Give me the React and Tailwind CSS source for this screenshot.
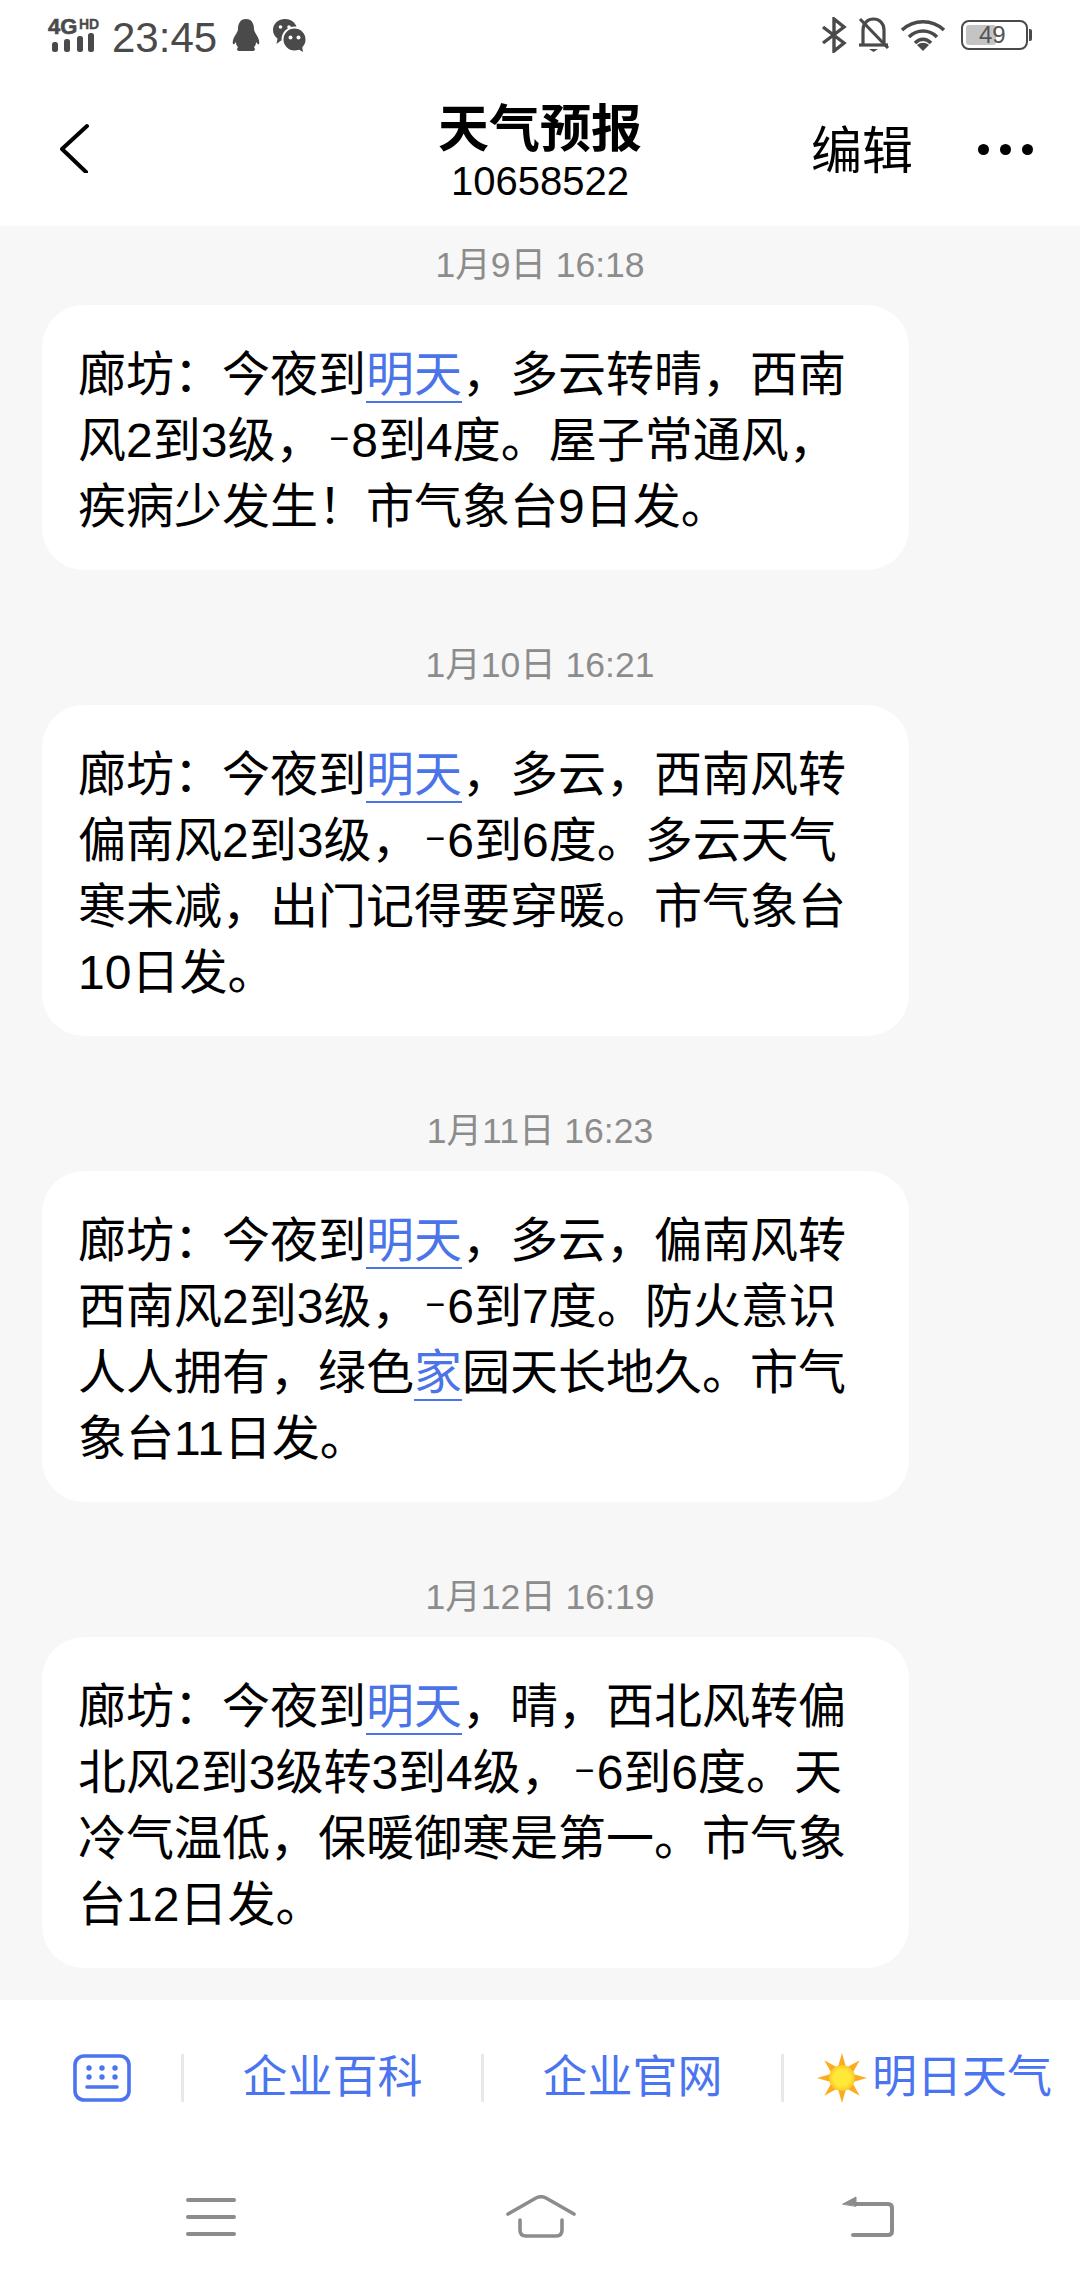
import { useMemo } from "react";

function Msg({ time, children }) {
  return (
    <div className="mb-[71px]">
      <div className="mb-[20px] h-[44px] text-center text-[35.5px] leading-[48px] text-[#8c8c8c]">{time}</div>
      <div className="ml-[42px] w-[867px] rounded-[42px] bg-white px-[36px] pb-[30px] pt-[37px] text-[48px] leading-[66px] text-black whitespace-nowrap">
        {children}
      </div>
    </div>
  );
}

function Link({ children }) {
  return (
    <span className="text-[#4a74e8] underline decoration-[2px] underline-offset-[10px]">{children}</span>
  );
}

// the reference's minus is shorter and sits higher than the font's
function Minus() {
  return <span className="relative -top-[7px] ml-[6px] mr-[2px] text-[34px] leading-none">−</span>;
}

function Sun() {
  // 8 rays, tips at r=25 and valleys at r=11
  const points = useMemo(() => {
    const out = [];
    for (let i = 0; i < 16; i++) {
      const r = i % 2 === 0 ? 25 : 11;
      const a = (i * Math.PI) / 8 - Math.PI / 2;
      out.push(`${25 + r * Math.cos(a)},${25 + r * Math.sin(a)}`);
    }
    return out.join(" ");
  }, []);
  return (
    <svg width="50" height="50" viewBox="0 0 50 50">
      <defs>
        <radialGradient id="sunCore">
          <stop offset="0.65" stopColor="#ffe838" />
          <stop offset="1" stopColor="#ffc428" />
        </radialGradient>
      </defs>
      <polygon points={points} fill="#fbab1e" />
      <circle cx="25" cy="25" r="13" fill="url(#sunCore)" />
    </svg>
  );
}

export default function App() {
  return (
    <div className="flex h-[2280px] w-[1080px] flex-col overflow-hidden bg-white font-['Liberation_Sans','Noto_Sans_CJK_SC',sans-serif]">
      {/* status bar */}
      <div className="flex h-[70px] shrink-0 items-center pl-[48px] pr-[48px] text-[#4a4a4a]">
        <div className="relative h-[36px] w-[52px]">
          <span className="absolute left-0 top-[-3px] text-[22px] font-bold leading-[26px] [-webkit-text-stroke:0.6px_#4a4a4a]">4G</span>
          <span className="absolute left-[31px] top-[0px] text-[14px] font-bold leading-[14px] [-webkit-text-stroke:0.3px_#4a4a4a]">HD</span>
          <svg className="absolute left-0 top-0" width="52" height="36" viewBox="0 0 52 36" fill="#4a4a4a">
            <rect x="4" y="25" width="6" height="10" rx="2.500" />
            <rect x="16" y="22" width="6" height="13" rx="2.500" />
            <rect x="29" y="19" width="6" height="16" rx="2.500" />
            <rect x="40" y="16" width="6" height="19" rx="2.500" />
          </svg>
        </div>
        <span className="ml-[12px] mt-[5px] text-[42px] leading-[48px]">23:45</span>
        <svg className="ml-[15px]" width="28" height="32" viewBox="0 0 28 32" fill="#4a4a4a">
          <path d="M14 0 C8 0 6 5 6 10 C6 12 5 13 4 15 C2 18 0 22 1 25 C2 26 3 24 4 23 C4 26 5 27 6 28 L5 30 Q5 32 8 32 L20 32 Q23 32 23 30 L22 28 C23 27 24 26 24 23 C25 24 26 26 27 25 C28 22 26 18 24 15 C23 13 22 12 22 10 C22 5 20 0 14 0 Z" />
        </svg>
        <svg className="ml-[13px]" width="33" height="33" viewBox="0 0 33 33">
          <path d="M12 0 C18.500 0 24 4.500 24 11 C24 17.500 18.500 22 12 22 C10.500 22 9 21.700 8 21.500 L3.500 25 L4.500 19.500 C1.500 17.500 0 14.500 0 11 C0 4.500 5.500 0 12 0 Z" fill="#4a4a4a" />
          <circle cx="7.500" cy="8" r="1.800" fill="#fff" />
          <circle cx="16" cy="8" r="1.800" fill="#fff" />
          <circle cx="21.500" cy="20.500" r="12" fill="#4a4a4a" stroke="#fff" strokeWidth="2" />
          <path d="M25 30 L30 33 L29 27 Z" fill="#4a4a4a" />
          <circle cx="17.500" cy="18.500" r="2" fill="#fff" />
          <circle cx="25.500" cy="18.500" r="2" fill="#fff" />
        </svg>
        <div className="ml-auto flex items-center">
          <svg width="26" height="36" viewBox="0 0 26 36" fill="none" stroke="#4a4a4a" strokeWidth="3.4">
            <path d="M2 10 L23 26 L13 34 V2 L23 10 L2 26" />
          </svg>
          <svg className="ml-[11px]" width="32" height="36" viewBox="0 0 32 36" fill="none" stroke="#4a4a4a" strokeWidth="3.2">
            <path d="M5 27 V13 C5 6 10 2 15.500 2 C21 2 26 6 26 13 V27" />
            <path d="M1 28 H30" />
            <path d="M2 2 L30 31" />
            <path d="M11 32 H20 L15.500 35 Z" fill="#4a4a4a" stroke="none" />
          </svg>
          <svg className="ml-[10px]" width="46" height="34" viewBox="0 0 46 34" fill="none" stroke="#4a4a4a" strokeWidth="3.6">
            <path d="M2 12 C14 1 32 1 44 12" />
            <path d="M9 19 C17 11 29 11 37 19" />
            <path d="M15 25 C20 20 26 20 31 25" />
            <path d="M17 27 L23 33 L29 27 C25 24 21 24 17 27 Z" fill="#4a4a4a" stroke="none" />
          </svg>
          <div className="ml-[15px] flex items-center">
            <div className="relative h-[30px] w-[67px] rounded-[8px] border-2 border-[#4a4a4a]">
              <div className="absolute left-[3px] top-[3px] h-[20px] w-[30px] rounded-[3px] bg-[#c4c4c4]" />
              <span className="absolute left-[16px] top-[-1px] text-[24px] leading-[28px] text-[#555]">49</span>
            </div>
            <div className="ml-[1px] h-[12px] w-[3px] rounded-r-[2px] bg-[#4a4a4a]" />
          </div>
        </div>
      </div>

      {/* title bar */}
      <div className="grid h-[156px] shrink-0 grid-cols-[1fr_auto_1fr] items-center">
        <div className="pl-[60px]">
          <svg width="30" height="50" viewBox="0 0 30 50" fill="none" stroke="#000" strokeWidth="4" strokeLinecap="round" strokeLinejoin="round">
            <path d="M27 3 L2 26 L26 49" />
          </svg>
        </div>
        <div className="pt-[7px] text-center text-black">
          <div className="text-[51px] font-bold leading-[58px]">天气预报</div>
          <div className="text-[40px] leading-[44px]">10658522</div>
        </div>
        <div className="flex items-center justify-end pr-[47px]">
          <span className="pt-[8px] text-[51px] leading-[60px] text-black">编辑</span>
          <div className="ml-[65px] mt-[3px] flex gap-[11px]">
            <div className="size-[11px] rounded-full bg-black" />
            <div className="size-[11px] rounded-full bg-black" />
            <div className="size-[11px] rounded-full bg-black" />
          </div>
        </div>
      </div>

      {/* messages */}
      <div className="h-[1774px] shrink-0 overflow-hidden bg-[#f7f7f7] pt-[15px]">
        <Msg time="1月9日 16:18">
          <div>廊坊：今夜到<Link>明天</Link>，多云转晴，西南</div>
          <div>风2到3级，<Minus />8到4度。屋子常通风，</div>
          <div>疾病少发生！市气象台9日发。</div>
        </Msg>
        <Msg time="1月10日 16:21">
          <div>廊坊：今夜到<Link>明天</Link>，多云，西南风转</div>
          <div>偏南风2到3级，<Minus />6到6度。多云天气</div>
          <div>寒未减，出门记得要穿暖。市气象台</div>
          <div>10日发。</div>
        </Msg>
        <Msg time="1月11日 16:23">
          <div>廊坊：今夜到<Link>明天</Link>，多云，偏南风转</div>
          <div>西南风2到3级，<Minus />6到7度。防火意识</div>
          <div>人人拥有，绿色<Link>家</Link>园天长地久。市气</div>
          <div>象台11日发。</div>
        </Msg>
        <Msg time="1月12日 16:19">
          <div>廊坊：今夜到<Link>明天</Link>，晴，西北风转偏</div>
          <div>北风2到3级转3到4级，<Minus />6到6度。天</div>
          <div>冷气温低，保暖御寒是第一。市气象</div>
          <div>台12日发。</div>
        </Msg>
      </div>

      {/* quick menu */}
      <div className="flex h-[156px] shrink-0 items-center text-[45px] leading-[50px] text-[#4a74f0]">
        <div className="box-content flex h-[48px] w-[158px] items-center justify-center border-r-[3px] border-[#e8e8e8] pl-[23px]">
          <svg width="58" height="48" viewBox="0 0 58 48" fill="none" stroke="#4a74f0" strokeWidth="3.6">
            <rect x="2" y="2" width="54" height="44" rx="9" />
            <path d="M14 33 H44" strokeLinecap="round" />
            <g fill="#4a74f0" stroke="none">
              <circle cx="16" cy="14" r="2.700" />
              <circle cx="29" cy="14" r="2.700" />
              <circle cx="42" cy="14" r="2.700" />
              <circle cx="16" cy="23" r="2.700" />
              <circle cx="29" cy="23" r="2.700" />
              <circle cx="42" cy="23" r="2.700" />
            </g>
          </svg>
        </div>
        <div className="box-content flex h-[48px] w-[297px] items-center justify-center border-r-[3px] border-[#e8e8e8]">企业百科</div>
        <div className="box-content flex h-[48px] w-[297px] items-center justify-center border-r-[3px] border-[#e8e8e8]">企业官网</div>
        <div className="flex h-[48px] items-center pl-[33px]">
          <Sun />
          <span className="ml-[5px]">明日天气</span>
        </div>
      </div>

      {/* system nav */}
      <div className="flex flex-1 items-center pb-[2px]">
        <div className="flex w-[422px] justify-center">
          <svg width="50" height="40" viewBox="0 0 50 40" fill="none" stroke="#8c8c8c" strokeWidth="4" strokeLinecap="round">
            <path d="M2 3 H48 M2 20 H48 M2 37 H48" />
          </svg>
        </div>
        <div className="flex w-[238px] justify-center">
          <svg width="72" height="44" viewBox="0 0 72 44" fill="none" stroke="#8c8c8c" strokeWidth="3.6" strokeLinecap="round" strokeLinejoin="round">
            <path d="M3 19 L31 3 Q36 0.500 41 3 L69 19" />
            <path d="M15 25 V35 Q15 41 21 41 H51 Q57 41 57 35 V25" />
          </svg>
        </div>
        <div className="flex w-[416px] justify-center">
          <svg width="52" height="44" viewBox="0 0 52 44" fill="none" stroke="#8c8c8c" strokeWidth="4" strokeLinecap="round" strokeLinejoin="round">
            <path d="M14 9 H46 Q50 9 50 13 V36 Q50 40 46 40 H11" />
            <path d="M1 9 L14 2 V11 Z" fill="#8c8c8c" stroke="#8c8c8c" strokeWidth="1" />
          </svg>
        </div>
      </div>
    </div>
  );
}
